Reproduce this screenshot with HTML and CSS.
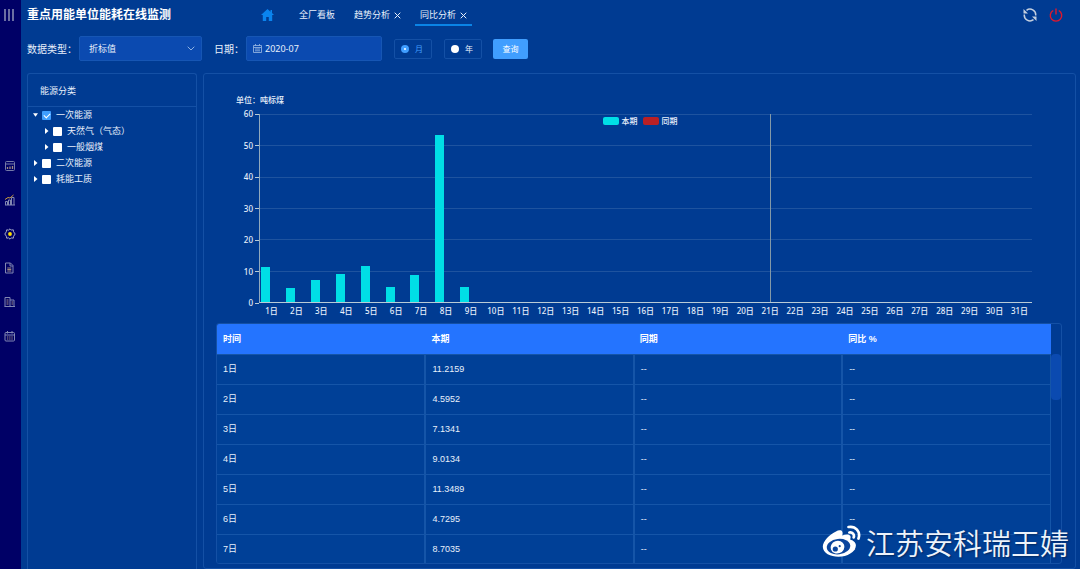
FILE: index.html
```html
<!DOCTYPE html>
<html lang="zh-CN">
<head>
<meta charset="utf-8">
<meta name="viewport" content="width=device-width, initial-scale=1">
<title>重点用能单位能耗在线监测</title>
<link rel="stylesheet" href="styles.css">
</head>
<body>
<aside class="sidebar">
  <button class="icon-btn menu-toggle" type="button" aria-label="菜单">
    <svg width="12" height="14" viewBox="0 0 12 14" stroke="#a4a9c4" stroke-width="1.3"><path d="M2 1v12M6 1v12M10 1v12"/></svg>
  </button>
  <nav class="side-nav" aria-label="主导航">
    <button class="icon-btn" type="button" aria-label="看板">
      <svg width="12" height="12" viewBox="0 0 12 12" fill="none" stroke="#7479a8"><rect x="1.500" y="1.500" width="9" height="9" rx="1"/><path d="M1.500 4h9"/><path d="M3.500 9V7M6 9V6.500M8.500 9V6" stroke="#a08a80" stroke-width="1.300"/></svg>
    </button>
    <button class="icon-btn" type="button" aria-label="统计">
      <svg width="12" height="12" viewBox="0 0 12 12" fill="none" stroke="#8287b2"><path d="M1.500 11V7.500h2V11M4.500 11V6h2v5M7.500 11V3.500h2.500V11M1 11h10"/><path d="M1 5.500l3-2 2 .5L9.500 1" stroke="#c99b3f"/></svg>
    </button>
    <button class="icon-btn" type="button" aria-label="分析">
      <svg width="12" height="12" viewBox="0 0 12 12" fill="none" stroke="#a2a6c8"><path d="M6 .8l1.300 1.300 2-.3.3 2L11.200 6 9.700 8.200l-.4 2-2-.3L6 11.200 4.700 9.900l-2 .3-.4-2L.8 6l1.500-2.200.4-2 2 .3z"/><circle cx="6" cy="6" r="1.900" fill="#ffe100" stroke="none"/></svg>
    </button>
    <button class="icon-btn" type="button" aria-label="报告">
      <svg width="12" height="12" viewBox="0 0 12 12" fill="none" stroke="#8287b2"><path d="M1.500 1h5l2.500 2.500V11H1.500z"/><path d="M6 1v3h3"/><path d="M3.300 6h4M3.300 7.500h4M3.300 9h4" stroke="#a08a80"/></svg>
    </button>
    <button class="icon-btn" type="button" aria-label="企业">
      <svg width="12" height="12" viewBox="0 0 12 12" fill="none" stroke="#8287b2"><path d="M1 10.500v-9h5v9M6 4h4v6.500M.5 10.500h10.500"/><path d="M2.500 4h2M2.500 6h2M2.500 8h2M7.500 6h1.500M7.500 8h1.500" stroke="#a08a80"/></svg>
    </button>
    <button class="icon-btn" type="button" aria-label="日历">
      <svg width="12" height="12" viewBox="0 0 12 12" fill="none" stroke="#8287b2"><rect x="1" y="2.500" width="9.500" height="8.500" rx="1"/><path d="M1 5h9.500M3.500 1v2.500M8 1v2.500"/><path d="M3 7h1.300M5.200 7h1.300M7.400 7h1.300M3 9h1.300M5.200 9h1.300M7.400 9h1.300" stroke="#a08a80"/></svg>
    </button>
  </nav>
</aside>

<div class="page">
  <header class="topbar">
    <h1 class="title">重点用能单位能耗在线监测</h1>
    <nav class="tabs" aria-label="标签页">
      <a class="home" href="#" aria-label="首页"><svg width="13" height="12" viewBox="0 0 13 12" fill="#0a84ee"><path d="M6.500 0L0 6h1.800v6h3.400V8h2.600v4h3.400V6H13l-2-1.900V1H9.500v1.700z"/></svg></a>
      <a class="tab" href="#">全厂看板</a>
      <span class="tab"><a href="#">趋势分析</a><button class="close" type="button" aria-label="关闭趋势分析"><svg width="7" height="7" viewBox="0 0 7 7" stroke="currentColor"><path d="M.7.7l5.600 5.600M6.300.7L.7 6.300"/></svg></button></span>
      <span class="tab active"><a href="#">同比分析</a><button class="close" type="button" aria-label="关闭同比分析"><svg width="7" height="7" viewBox="0 0 7 7" stroke="currentColor"><path d="M.7.7l5.600 5.600M6.300.7L.7 6.300"/></svg></button></span>
    </nav>
    <div class="actions">
      <button class="icon-btn" type="button" aria-label="刷新"><svg width="14" height="14" viewBox="0 0 14 14" fill="none" stroke="#c3cfdf" stroke-width="1.500"><path d="M3.500 2.400A5.700 5.700 0 0 1 12.700 7.500M10.500 11.600A5.700 5.700 0 0 1 1.300 6.500"/><path d="M.5 1v4.500h4.500zM13.500 13V8.500H9z" fill="#c3cfdf" stroke="none"/></svg></button>
      <button class="icon-btn" type="button" aria-label="退出"><svg width="14" height="14" viewBox="0 0 14 14" fill="none" stroke="#e0182c" stroke-width="1.400"><path d="M4.200 2.500a5.700 5.700 0 1 0 5.600 0M7 .5v6"/></svg></button>
    </div>
  </header>

  <form class="filters">
    <label class="label" for="type">数据类型：</label>
    <span class="select-box">
      <select id="type" class="field"><option>折标值</option></select>
      <svg class="chevron" width="8" height="5" viewBox="0 0 8 5" fill="none" stroke="#8db2e2"><path d="M.7.7L4 4 7.300.7"/></svg>
    </span>
    <label class="label label-date" for="date">日期：</label>
    <span class="field date-box">
      <svg width="9" height="9" viewBox="0 0 9 9" fill="none" stroke="#8fb0df" stroke-width=".9"><path d="M.5 1.500h8v7h-8zM.5 3.500h8M2.500 0v2M6.500 0v2M2 5h5M2 6.800h5"/></svg>
      <input id="date" class="date" type="text" value="2020-07">
    </span>
    <label class="radio checked"><input type="radio" name="unit" checked>月</label>
    <label class="radio"><input type="radio" name="unit">年</label>
    <button class="query" type="button">查询</button>
  </form>

  <main class="content">
    <section class="panel category">
      <h2 class="panel-title">能源分类</h2>
      <ul class="tree">
        <li>
          <div class="node"><button class="caret open" type="button" aria-label="收起"></button><label><input type="checkbox" checked>一次能源</label></div>
          <ul class="subtree">
            <li class="node"><button class="caret" type="button" aria-label="展开"></button><label><input type="checkbox">天然气（气态）</label></li>
            <li class="node"><button class="caret" type="button" aria-label="展开"></button><label><input type="checkbox">一般烟煤</label></li>
          </ul>
        </li>
        <li class="node"><button class="caret" type="button" aria-label="展开"></button><label><input type="checkbox">二次能源</label></li>
        <li class="node"><button class="caret" type="button" aria-label="展开"></button><label><input type="checkbox">耗能工质</label></li>
      </ul>
    </section>

    <section class="panel data">
      <figure class="chart">
        <figcaption class="unit">单位：吨标煤</figcaption>
        <div class="y-axis"><span>60</span><span>50</span><span>40</span><span>30</span><span>20</span><span>10</span><span>0</span></div>
        <div class="plot">
          <div class="grid-lines"><i></i><i></i><i></i><i></i><i></i><i></i></div>
          <div class="legend"><i class="swatch current"></i><span>本期</span><i class="swatch previous"></i><span>同期</span></div>
          <div class="bars">
            <div class="day"><i class="bar" style="height:18.7%"></i></div>
            <div class="day"><i class="bar" style="height:7.66%"></i></div>
            <div class="day"><i class="bar" style="height:11.9%"></i></div>
            <div class="day"><i class="bar" style="height:15%"></i></div>
            <div class="day"><i class="bar" style="height:18.9%"></i></div>
            <div class="day"><i class="bar" style="height:7.88%"></i></div>
            <div class="day"><i class="bar" style="height:14.5%"></i></div>
            <div class="day"><i class="bar" style="height:88.8%"></i></div>
            <div class="day"><i class="bar" style="height:7.9%"></i></div>
            <div class="day"></div><div class="day"></div><div class="day"></div><div class="day"></div><div class="day"></div>
            <div class="day"></div><div class="day"></div><div class="day"></div><div class="day"></div><div class="day"></div>
            <div class="day"></div><div class="day pointed"></div><div class="day"></div><div class="day"></div><div class="day"></div>
            <div class="day"></div><div class="day"></div><div class="day"></div><div class="day"></div><div class="day"></div>
            <div class="day"></div><div class="day"></div>
          </div>
        </div>
        <div class="x-axis">
          <span>1日</span><span>2日</span><span>3日</span><span>4日</span><span>5日</span><span>6日</span><span>7日</span><span>8日</span><span>9日</span><span>10日</span><span>11日</span><span>12日</span><span>13日</span><span>14日</span><span>15日</span><span>16日</span><span>17日</span><span>18日</span><span>19日</span><span>20日</span><span>21日</span><span>22日</span><span>23日</span><span>24日</span><span>25日</span><span>26日</span><span>27日</span><span>28日</span><span>29日</span><span>30日</span><span>31日</span>
        </div>
      </figure>

      <div class="table-box">
        <table class="table">
          <thead><tr><th>时间</th><th>本期</th><th>同期</th><th>同比 %</th></tr></thead>
          <tbody>
            <tr><td>1日</td><td>11.2159</td><td>--</td><td>--</td></tr>
            <tr><td>2日</td><td>4.5952</td><td>--</td><td>--</td></tr>
            <tr><td>3日</td><td>7.1341</td><td>--</td><td>--</td></tr>
            <tr><td>4日</td><td>9.0134</td><td>--</td><td>--</td></tr>
            <tr><td>5日</td><td>11.3489</td><td>--</td><td>--</td></tr>
            <tr><td>6日</td><td>4.7295</td><td>--</td><td>--</td></tr>
            <tr><td>7日</td><td>8.7035</td><td>--</td><td>--</td></tr>
          </tbody>
        </table>
        <div class="rail"><i class="thumb"></i></div>
      </div>
    </section>
  </main>
</div>

<div class="watermark">
  <svg width="39" height="34" viewBox="0 0 39 34">
    <path fill="#fff" d="M14 6.500c2.500-1.500 5.500-1.600 6.300.3.500 1.200.3 2.500-.1 3.700 3-1.200 6.500-1.700 7.900.1.900 1.200.5 2.700 0 4 3 .9 6 2.700 5.800 6.200-.4 6.300-8.700 11-17.400 11C8.500 31.800 1 28.200.8 21.800.6 16.200 8 9.300 14 6.500z"/>
    <ellipse cx="16.500" cy="21.600" rx="11.800" ry="7.700" transform="rotate(-7 16.500 21.600)" fill="#0b459d"/>
    <ellipse cx="15.500" cy="22.200" rx="7" ry="6.300" transform="rotate(-20 15.500 22.200)" fill="#fff"/>
    <circle cx="13.300" cy="24" r="2.600" fill="#0b459d"/><circle cx="17.700" cy="21.200" r="1.100" fill="#0b459d"/>
    <path fill="none" stroke="#fff" stroke-width="2.700" stroke-linecap="round" d="M26.500 2c7-1.300 12.300 4.700 10 11.500M27.400 7.500c3-.6 5.300 2 4.300 4.900"/>
  </svg>
  <span>江苏安科瑞王婧</span>
</div>
</body>
</html>
```
FILE: styles.css
```css
* { box-sizing: border-box; }

body {
  display: flex;
  height: 100vh;
  margin: 0;
  overflow: hidden;
  background: #003b92;
  color: #e8f0fb;
  font: 9px/16px "Noto Sans", "Noto Sans CJK SC", sans-serif;
}

h1, h2, ul, figure { margin: 0; padding: 0; list-style: none; }
a { color: inherit; text-decoration: none; }
button, input, select { margin: 0; padding: 0; border: 0; background: none; color: inherit; font: inherit; }
svg { display: block; flex: none; }
i { display: block; }

/* Sidebar */
.sidebar {
  flex: none;
  width: 21px;
  background: #000066;
}
.icon-btn { display: flex; align-items: center; justify-content: center; }
.menu-toggle { width: 17px; height: 30px; }
.side-nav {
  display: flex;
  flex-direction: column;
  gap: 22px;
  align-items: center;
  padding: 130px 1px 0 0;
}

/* Header */
.page {
  display: flex;
  flex: 1;
  flex-direction: column;
  min-width: 0;
  padding: 0 4px 0 6px;
}
.topbar { display: flex; align-items: center; height: 30px; }
.title { flex: none; width: 234px; font-size: 12px; font-weight: 700; color: #fff; }
.tabs { display: flex; align-items: center; }
.home { margin-right: 20px; }
.tab {
  display: flex;
  gap: 4px;
  align-items: center;
  height: 22px;
  margin-right: 9px;
  padding: 0 5px;
  border-bottom: 2px solid transparent;
  border-top: 2px solid transparent;
}
.tab.active { border-bottom-color: #0a84e6; }
.close { display: flex; }
.actions { display: flex; gap: 12px; margin-left: auto; padding-right: 13px; }

/* Filters */
.filters { display: flex; align-items: center; height: 37px; }
.label { flex: none; width: 52px; font-size: 10px; }
.label-date { width: 32px; margin-left: 12px; }
.field {
  height: 25px;
  border: 1px solid #1656b4;
  border-radius: 2px;
  background: #0b4ab0;
}
.select-box { display: grid; align-items: center; width: 123px; }
.select-box > * { grid-area: 1 / 1; }
select.field { width: 100%; padding-left: 9px; appearance: none; }
.chevron { justify-self: end; margin-right: 7px; pointer-events: none; }
.date-box { display: flex; gap: 3px; align-items: center; width: 136px; padding-left: 6px; }
.date { width: 100%; min-width: 0; }
.radio {
  display: flex;
  gap: 6px;
  align-items: center;
  width: 38px;
  height: 20px;
  margin-left: 12px;
  padding-left: 6px;
  border: 1px solid #1450a5;
  border-radius: 2px;
  font-size: 8px;
}
.radio.checked { color: #409eff; }
.radio input { width: 8px; height: 8px; border-radius: 50%; background: #fff; appearance: none; }
.radio input:checked { border: 3px solid #409eff; }
.query {
  width: 35px;
  height: 20px;
  margin-left: 11px;
  border-radius: 2px;
  background: #409eff;
  color: #fff;
  font-size: 8px;
}

/* Panels */
.content { display: flex; flex: 1; gap: 6px; min-height: 0; padding-top: 6px; }
.panel { border: 1px solid #1450a5; border-radius: 3px; }
.category { flex: none; width: 170px; border-bottom: 0; border-radius: 3px 3px 0 0; }
.panel-title {
  height: 33px;
  padding-left: 12px;
  border-bottom: 1px solid #1450a5;
  font-size: 9px;
  font-weight: 400;
  line-height: 33px;
}
.data { display: flex; flex: 1; flex-direction: column; min-width: 0; padding: 18px 13px 4px 12px; }

/* Category tree */
.tree { padding-left: 5px; }
.subtree { padding-left: 11px; }
.node { display: flex; gap: 4px; align-items: center; height: 16px; }
.node label { display: flex; gap: 5px; align-items: center; }
.node input { width: 9px; height: 9px; border-radius: 1px; background: #fff; appearance: none; }
.node input:checked { display: grid; place-items: center; background: #409eff; }
.node input:checked::before {
  content: "";
  width: 5px;
  height: 3px;
  border: solid #fff;
  border-width: 0 0 1px 1px;
  transform: rotate(-45deg);
}
.caret {
  width: 5px;
  height: 6px;
  background: #fff;
  clip-path: polygon(20% 0, 90% 50%, 20% 100%);
}
.caret.open { clip-path: polygon(0 20%, 100% 20%, 50% 80%); }

/* Chart */
.chart {
  display: grid;
  grid-template-columns: 39px 1fr;
  grid-template-rows: 22px 189px 18px;
  margin-right: 30px;
  padding-left: 4px;
  font-size: 8px;
  font-weight: 500;
}
.unit { grid-column: 1 / -1; padding-left: 16px; }
.y-axis {
  display: flex;
  flex-direction: column;
  justify-content: space-between;
  margin: -5px 0;
  line-height: 10px;
}
.y-axis span { display: flex; gap: 2px; align-items: center; justify-content: flex-end; }
.y-axis span::after { content: ""; width: 4px; height: 1px; background: #b9cbd6; }
.plot {
  display: grid;
  border-bottom: 1px solid #b9cbd6;
  border-left: 1px solid #91a9bd;
}
.plot > * { grid-area: 1 / 1; }
.grid-lines { display: grid; grid-template-rows: repeat(6, 1fr); }
.grid-lines i { border-top: 1px solid #1e539f; }
.legend {
  display: flex;
  align-items: center;
  place-self: start center;
  gap: 3px;
  height: 14px;
  padding-right: 12px;
}
.swatch { width: 16px; height: 8px; border-radius: 2px; }
.current { background: #00dfe6; }
.previous { margin-left: 2px; background: #b92025; }
.bars { display: grid; grid-template-columns: repeat(31, 1fr); }
.day { display: flex; align-items: flex-end; padding-left: 1px; }
.bar { width: 9px; background: #00dfe6; }
.pointed { padding: 0; background: linear-gradient(#8399a8, #8399a8) center / 1px 100% no-repeat; }
.x-axis {
  display: grid;
  grid-column: 2;
  grid-template-columns: repeat(31, 1fr);
  text-align: center;
  white-space: nowrap;
}

/* Table */
.table-box {
  display: flex;
  flex: 1;
  min-height: 0;
  margin-top: 2px;
  overflow: hidden;
  border: 1px solid #1450a5;
  border-radius: 3px;
}
.table {
  flex: 1;
  width: 100%;
  border-collapse: collapse;
  table-layout: fixed;
  background: #004097;
  font-family: "Liberation Sans", "Noto Sans CJK SC", sans-serif;
}
.table th, .table td { height: 30px; padding: 0 6px; text-align: left; }
.table th { background: #2474ff; color: #fff; font-weight: 700; }
.table td { border: 1px solid #1555a8; border-left-width: 0; border-right-width: 2px; }
.table td:last-child { border-right-width: 1px; }
.rail { flex: none; width: 10px; padding-top: 30px; }
.thumb { height: 46px; border-radius: 4px; background: #0b4ab0; }

/* Watermark */
.watermark {
  position: absolute;
  right: 11px;
  bottom: 6px;
  display: flex;
  gap: 5px;
  align-items: center;
  color: #edf3fb;
  font: 350 29px/42px "Noto Sans CJK SC", sans-serif;
  text-shadow: 1px 1px 2px #00265e;
}
```
